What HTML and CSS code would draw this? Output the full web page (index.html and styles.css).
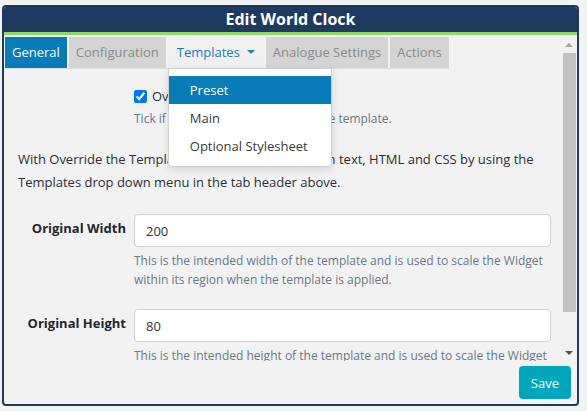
FILE: index.html
```
<!DOCTYPE html>
<html lang="en">
<head>
<meta charset="utf-8">
<title>Edit World Clock</title>
<link rel="stylesheet" href="styles.css">
</head>
<body>
<div class="window">
  <div class="titlebar">Edit World Clock</div>
  <div class="accent"></div>
  <div class="body-row">
    <div class="scroll">
      <ul class="tabs">
        <li class="tab tab-active">General</li>
        <li class="tab">Configuration</li>
        <li class="tab tab-open">Templates<span class="caret"></span>
          <ul class="menu">
            <li class="menu-item menu-selected">Preset</li>
            <li class="menu-item">Main</li>
            <li class="menu-item">Optional Stylesheet</li>
          </ul>
        </li>
        <li class="tab">Analogue Settings</li>
        <li class="tab">Actions</li>
      </ul>
      <div class="pane">
        <div class="offset check-row">
          <input class="check" type="checkbox" checked>
          <span class="check-label">Override the Template</span>
        </div>
        <div class="offset help check-help">Tick if you would like to override the template.</div>
        <p class="intro">With Override the Template selected enter your own text, HTML and CSS by using the Templates drop down menu in the tab header above.</p>
        <div class="field">
          <label class="field-label">Original Width</label>
          <div class="control">
            <input class="input" type="text" value="200">
            <div class="help">This is the intended width of the template and is used to scale the Widget within its region when the template is applied.</div>
          </div>
        </div>
        <div class="field">
          <label class="field-label">Original Height</label>
          <div class="control">
            <input class="input" type="text" value="80">
            <div class="help">This is the intended height of the template and is used to scale the Widget within its region when the template is applied.</div>
          </div>
        </div>
      </div>
    </div>
    <div class="scrollbar">
      <div class="sb-arrow"><span class="tri-up"></span></div>
      <div class="sb-track"><div class="sb-thumb"></div></div>
      <div class="sb-arrow"><span class="tri-down"></span></div>
    </div>
  </div>
  <div class="footer"><button class="save" type="button">Save</button></div>
</div>
</body>
</html>
```
FILE: styles.css
```
* { box-sizing: border-box; }
html, body { margin: 0; padding: 0; }
body {
  background: #f3f3f3;
  font-family: "Open Sans", "Liberation Sans", sans-serif;
  font-size: 13px;
  color: #2b2f36;
}
.window {
  margin: 5px 0 0 2px;
  width: 577px;
  height: 401px;
  border: 2px solid #1f3a5f;
  border-radius: 4px;
  background: #f2f2f2;
  display: flex;
  flex-direction: column;
  overflow: hidden;
}
.titlebar {
  height: 25px;
  line-height: 25px;
  background: #1f3a5f;
  color: #fff;
  font-weight: 700;
  font-size: 16px;
  text-align: center;
}
.accent { height: 3px; background: #8fd86a; }
.body-row {
  margin-top: 2px;
  height: 324px;
  display: flex;
}
.scroll {
  flex: 1;
  overflow: hidden;
  position: relative;
}
.tabs {
  list-style: none;
  margin: 0 0 0 1px;
  padding: 0;
  display: inline-flex;
  gap: 2px;
  border-bottom: 1px solid #dcdcdc;
  vertical-align: top;
}
.tab {
  position: relative;
  height: 31px;
  line-height: 31px;
  padding: 0 7px;
  background: #d4d4d4;
  color: #8a8a8a;
  white-space: nowrap;
}
.tab-active { background: #077cb9; color: #fff; }
.tab-open { background: #f0f0f0; color: #1f7bbf; padding: 0 9px; }
.caret {
  display: inline-block;
  margin-left: 7px;
  width: 0;
  height: 0;
  border-left: 4px solid transparent;
  border-right: 4px solid transparent;
  border-top: 4px solid #1f7bbf;
  vertical-align: middle;
  position: relative;
  top: -2px;
}
.menu {
  list-style: none;
  margin: 0;
  position: absolute;
  left: 0;
  top: 31px;
  width: 164px;
  padding: 7px 0 6px;
  background: #fff;
  border: 1px solid #cfcfcf;
  border-radius: 0 0 4px 4px;
  box-shadow: 0 3px 8px rgba(0, 0, 0, 0.12);
  z-index: 10;
}
.menu-item {
  height: 28px;
  line-height: 28px;
  padding-left: 21px;
  color: #3a3a3a;
}
.menu-selected { background: #077cb9; color: #fff; }
.pane { padding-top: 17px; }
.offset { margin-left: 130px; }
.check-row {
  height: 20px;
  line-height: 20px;
  display: flex;
  align-items: center;
}
.check {
  margin: 0 5px 0 0;
  width: 13px;
  height: 13px;
  accent-color: #0075ff;
}
.help {
  font-size: 12px;
  line-height: 19px;
  color: #6b7888;
}
.check-help { margin-top: 3px; }
.intro {
  margin: 20px 0 0;
  padding: 0 10px 0 14px;
  line-height: 23px;
}
.field {
  display: grid;
  grid-template-columns: 130px 1fr;
  margin-top: 20px;
}
.field-label {
  padding: 4px 8px 0 0;
  line-height: 20px;
  text-align: right;
  font-weight: 700;
  color: #23272d;
}
.control { padding-right: 10px; }
.input {
  display: block;
  width: 100%;
  height: 33px;
  border: 1px solid #ced4da;
  border-radius: 4px;
  padding: 0 11px;
  font-family: inherit;
  font-size: 13px;
  color: #333;
  background: #fff;
}
.control .help { margin-top: 4px; }
.scrollbar {
  width: 16px;
  background: #f1f1f1;
  display: flex;
  flex-direction: column;
}
.sb-arrow {
  height: 16px;
  display: flex;
  align-items: center;
  justify-content: center;
}
.tri-up, .tri-down {
  width: 0;
  height: 0;
  border-left: 4px solid transparent;
  border-right: 4px solid transparent;
}
.tri-up { border-bottom: 4px solid #a3a3a3; }
.tri-down { border-top: 4px solid #505050; }
.sb-track { flex: 1; }
.sb-thumb {
  height: 259px;
  margin: 0 1px 0 2px;
  background: #c1c1c1;
}
.footer {
  flex: 1;
  display: flex;
  justify-content: flex-end;
  align-items: flex-start;
  padding: 5px 6px 0;
}
.save {
  height: 33px;
  padding: 0 12px;
  border: none;
  border-radius: 4px;
  background: #00a6bc;
  color: #fff;
  font-family: inherit;
  font-size: 13px;
}
```
